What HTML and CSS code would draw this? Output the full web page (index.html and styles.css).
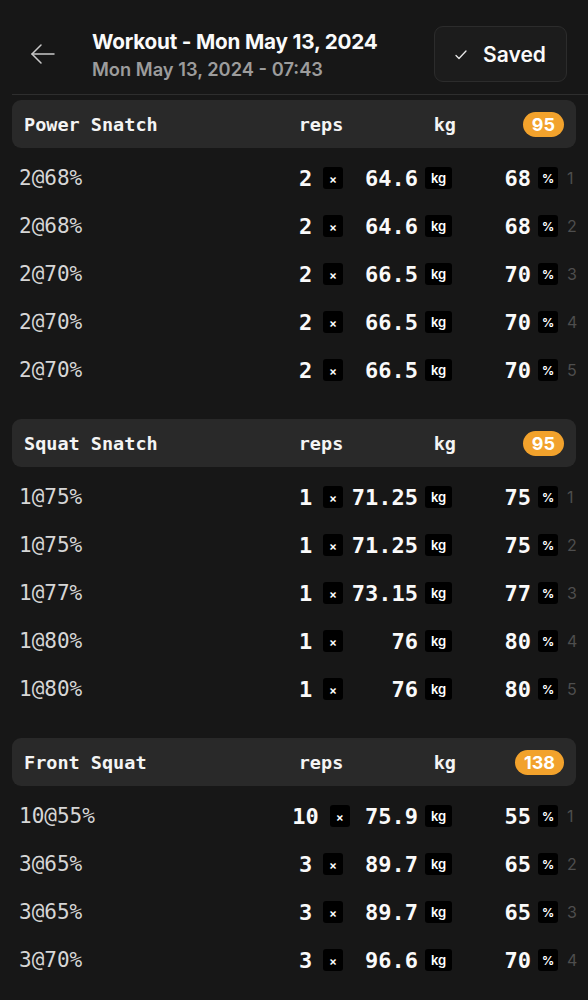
FILE: index.html
```html
<!DOCTYPE html>
<html>
<head>
<meta charset="utf-8">
<link rel="stylesheet" href="styles.css">
</head>
<body>
<div class="page">
  <header class="top">
    <button class="back" aria-label="Back">
      <svg width="26" height="26" viewBox="0 0 26 26" fill="none" stroke="#c9c9c9" stroke-width="1.5" stroke-linecap="round" stroke-linejoin="round"><path d="M24 13H2"/><path d="M11 4L2 13L11 22"/></svg>
    </button>
    <div class="titles">
      <div class="title">Workout - Mon May 13, 2024</div>
      <div class="subtitle">Mon May 13, 2024 - 07:43</div>
    </div>
    <div class="saved">
      <svg width="12" height="10" viewBox="0 0 12 10" fill="none" stroke="#e8e8e8" stroke-width="1.3" stroke-linecap="round" stroke-linejoin="round"><path d="M1 5.5L4 8.5L11 1"/></svg>
      <span>Saved</span>
    </div>
  </header>

  <section class="ex">
    <div class="ex-head">
      <div class="ex-name">Power Snatch</div>
      <div class="h-reps">reps</div>
      <div class="h-kg">kg</div>
      <div class="h-badge"><span class="badge">95</span></div>
    </div>
    <div class="rows">
      <div class="row"><div class="lbl">2@68%</div><div class="reps"><span class="num">2</span><span class="tag x">×</span></div><div class="wt"><span class="num">64.6</span><span class="tag kg">kg</span></div><div class="pct"><span class="num">68</span><span class="tag p">%</span></div><div class="idx">1</div></div>
      <div class="row"><div class="lbl">2@68%</div><div class="reps"><span class="num">2</span><span class="tag x">×</span></div><div class="wt"><span class="num">64.6</span><span class="tag kg">kg</span></div><div class="pct"><span class="num">68</span><span class="tag p">%</span></div><div class="idx">2</div></div>
      <div class="row"><div class="lbl">2@70%</div><div class="reps"><span class="num">2</span><span class="tag x">×</span></div><div class="wt"><span class="num">66.5</span><span class="tag kg">kg</span></div><div class="pct"><span class="num">70</span><span class="tag p">%</span></div><div class="idx">3</div></div>
      <div class="row"><div class="lbl">2@70%</div><div class="reps"><span class="num">2</span><span class="tag x">×</span></div><div class="wt"><span class="num">66.5</span><span class="tag kg">kg</span></div><div class="pct"><span class="num">70</span><span class="tag p">%</span></div><div class="idx">4</div></div>
      <div class="row"><div class="lbl">2@70%</div><div class="reps"><span class="num">2</span><span class="tag x">×</span></div><div class="wt"><span class="num">66.5</span><span class="tag kg">kg</span></div><div class="pct"><span class="num">70</span><span class="tag p">%</span></div><div class="idx">5</div></div>
    </div>
  </section>

  <section class="ex">
    <div class="ex-head">
      <div class="ex-name">Squat Snatch</div>
      <div class="h-reps">reps</div>
      <div class="h-kg">kg</div>
      <div class="h-badge"><span class="badge">95</span></div>
    </div>
    <div class="rows">
      <div class="row"><div class="lbl">1@75%</div><div class="reps"><span class="num">1</span><span class="tag x">×</span></div><div class="wt"><span class="num">71.25</span><span class="tag kg">kg</span></div><div class="pct"><span class="num">75</span><span class="tag p">%</span></div><div class="idx">1</div></div>
      <div class="row"><div class="lbl">1@75%</div><div class="reps"><span class="num">1</span><span class="tag x">×</span></div><div class="wt"><span class="num">71.25</span><span class="tag kg">kg</span></div><div class="pct"><span class="num">75</span><span class="tag p">%</span></div><div class="idx">2</div></div>
      <div class="row"><div class="lbl">1@77%</div><div class="reps"><span class="num">1</span><span class="tag x">×</span></div><div class="wt"><span class="num">73.15</span><span class="tag kg">kg</span></div><div class="pct"><span class="num">77</span><span class="tag p">%</span></div><div class="idx">3</div></div>
      <div class="row"><div class="lbl">1@80%</div><div class="reps"><span class="num">1</span><span class="tag x">×</span></div><div class="wt"><span class="num">76</span><span class="tag kg">kg</span></div><div class="pct"><span class="num">80</span><span class="tag p">%</span></div><div class="idx">4</div></div>
      <div class="row"><div class="lbl">1@80%</div><div class="reps"><span class="num">1</span><span class="tag x">×</span></div><div class="wt"><span class="num">76</span><span class="tag kg">kg</span></div><div class="pct"><span class="num">80</span><span class="tag p">%</span></div><div class="idx">5</div></div>
    </div>
  </section>

  <section class="ex">
    <div class="ex-head">
      <div class="ex-name">Front Squat</div>
      <div class="h-reps">reps</div>
      <div class="h-kg">kg</div>
      <div class="h-badge"><span class="badge">138</span></div>
    </div>
    <div class="rows">
      <div class="row"><div class="lbl">10@55%</div><div class="reps"><span class="num">10</span><span class="tag x">×</span></div><div class="wt"><span class="num">75.9</span><span class="tag kg">kg</span></div><div class="pct"><span class="num">55</span><span class="tag p">%</span></div><div class="idx">1</div></div>
      <div class="row"><div class="lbl">3@65%</div><div class="reps"><span class="num">3</span><span class="tag x">×</span></div><div class="wt"><span class="num">89.7</span><span class="tag kg">kg</span></div><div class="pct"><span class="num">65</span><span class="tag p">%</span></div><div class="idx">2</div></div>
      <div class="row"><div class="lbl">3@65%</div><div class="reps"><span class="num">3</span><span class="tag x">×</span></div><div class="wt"><span class="num">89.7</span><span class="tag kg">kg</span></div><div class="pct"><span class="num">65</span><span class="tag p">%</span></div><div class="idx">3</div></div>
      <div class="row"><div class="lbl">3@70%</div><div class="reps"><span class="num">3</span><span class="tag x">×</span></div><div class="wt"><span class="num">96.6</span><span class="tag kg">kg</span></div><div class="pct"><span class="num">70</span><span class="tag p">%</span></div><div class="idx">4</div></div>
    </div>
  </section>
</div>
</body>
</html>
```
FILE: styles.css
```css
* { box-sizing: border-box; }
html, body {
  margin: 0;
  padding: 0;
  background: #171717;
  color: #fff;
  font-family: Inter, "Liberation Sans", sans-serif;
}
.page {
  padding: 0 12px;
  overflow: hidden;
}
.top {
  display: flex;
  align-items: center;
  height: 95px;
  padding: 26px 21px 12px 18px;
  border-bottom: 1px solid #2e2e2e;
  margin-right: -12px;
}
.back {
  background: none;
  border: 0;
  padding: 0;
  width: 26px;
  height: 26px;
  margin-right: 36px;
  display: flex;
}
.titles {
  flex: 1;
  display: flex;
  flex-direction: column;
  gap: 2px;
  padding-top: 1px;
}
.title {
  font-size: 20.7px;
  font-weight: 700;
  letter-spacing: -0.2px;
  color: #fafafa;
  line-height: 26px;
}
.subtitle {
  font-size: 18.3px;
  font-weight: 600;
  color: #9c9c9c;
  line-height: 24px;
}
.saved {
  width: 133px;
  height: 56px;
  border: 1px solid #2c2c2c;
  background: #1c1c1c;
  border-radius: 9px;
  display: flex;
  align-items: center;
  justify-content: center;
  gap: 16px;
  font-size: 21px;
  font-weight: 600;
  color: #fafafa;
}
.saved svg { margin-top: 2px; }

.ex { margin-top: 5px; margin-bottom: 25px; }
.ex + .ex { margin-top: 0; }

.ex-head, .row {
  display: grid;
  grid-template-columns: 1fr 62px 100px 106px 18px;
  align-items: center;
}
.ex-head {
  height: 48px;
  background: #292929;
  border-radius: 9px;
  padding-left: 12px;
  font-family: "DejaVu Sans Mono", monospace;
  font-weight: 700;
  font-size: 18.5px;
  color: #f4f4f4;
}
.h-reps { text-align: center; }
.h-kg { text-align: right; margin-right: -4px; }
.h-badge {
  grid-column: 4 / 6;
  display: flex;
  justify-content: flex-end;
  padding-right: 12px;
}
.badge {
  background: #f2a22c;
  color: #fff;
  font-family: Inter, "Liberation Sans", sans-serif;
  font-weight: 700;
  font-size: 18px;
  height: 25px;
  min-width: 41px;
  padding: 0 9px;
  border-radius: 13px;
  display: flex;
  align-items: center;
  justify-content: center;
}

.rows { margin-top: 6px; }
.row {
  height: 48px;
  padding-left: 7px;
}
.lbl {
  font-family: "DejaVu Sans Mono", monospace;
  font-size: 21px;
  color: #d6d6d6;
}
.num {
  font-family: "DejaVu Sans Mono", monospace;
  font-weight: 700;
  font-size: 22px;
  color: #fafafa;
}
.reps, .wt, .pct {
  display: flex;
  align-items: center;
}
.reps { justify-content: center; gap: 11px; }
.wt { justify-content: flex-end; gap: 7px; }
.pct { justify-content: flex-end; gap: 7px; }
.tag {
  flex: none;
  background: #000;
  border-radius: 3px;
  height: 22px;
  display: flex;
  align-items: center;
  justify-content: center;
  color: #fff;
  font-weight: 600;
}
.tag.x { width: 20px; font-size: 12px; }
.tag.kg { width: 27px; font-size: 13px; }
.tag.p { width: 20px; font-size: 12px; font-weight: 700; }
.idx {
  padding-left: 9px;
  font-size: 16px;
  color: #4e4e4e;
}
```
